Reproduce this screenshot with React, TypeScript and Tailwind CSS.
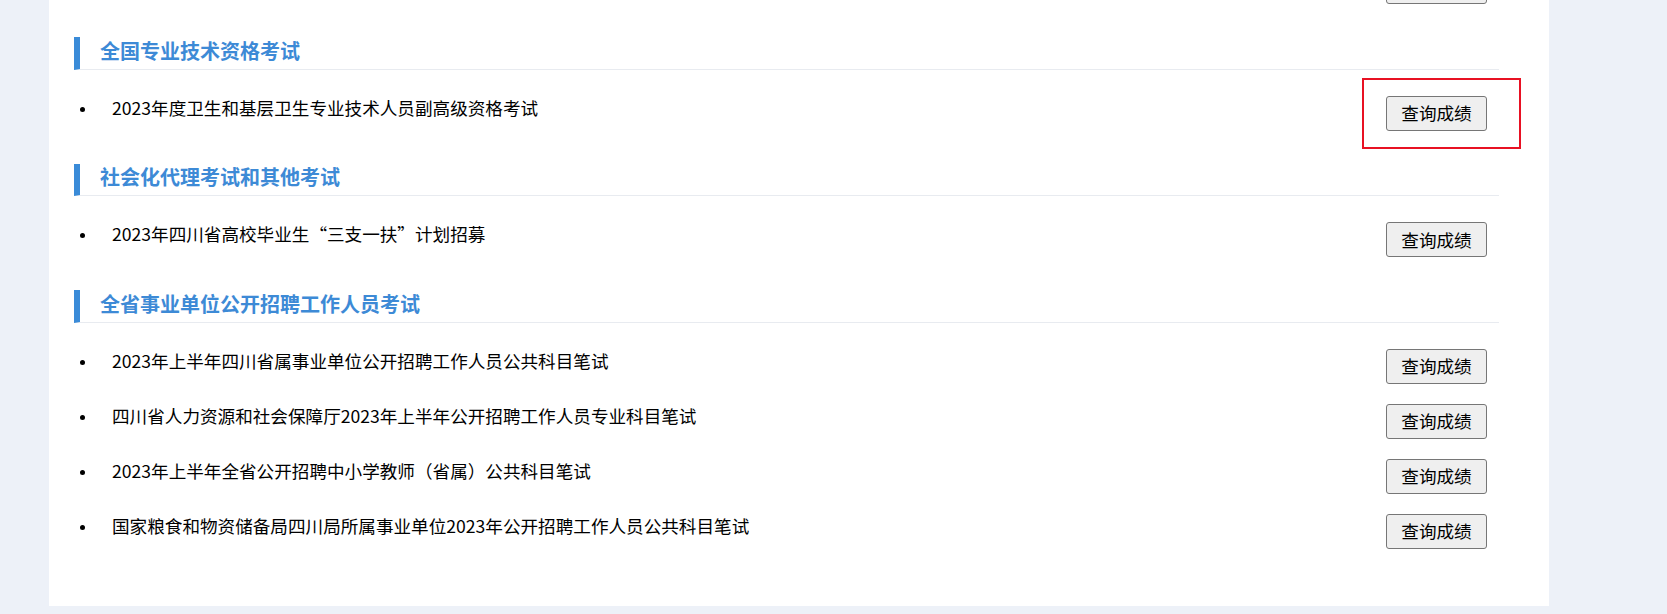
import React from "react";

type Section = { title: string; items: string[]; highlightFirst?: boolean };

const sections: Section[] = [
  {
    title: "全国专业技术资格考试",
    items: ["2023年度卫生和基层卫生专业技术人员副高级资格考试"],
    highlightFirst: true,
  },
  {
    title: "社会化代理考试和其他考试",
    items: ["2023年四川省高校毕业生“三支一扶”计划招募"],
  },
  {
    title: "全省事业单位公开招聘工作人员考试",
    items: [
      "2023年上半年四川省属事业单位公开招聘工作人员公共科目笔试",
      "四川省人力资源和社会保障厅2023年上半年公开招聘工作人员专业科目笔试",
      "2023年上半年全省公开招聘中小学教师（省属）公共科目笔试",
      "国家粮食和物资储备局四川局所属事业单位2023年公开招聘工作人员公共科目笔试",
    ],
  },
];

function QueryButton({ highlight }: { highlight?: boolean }) {
  return (
    <span className="relative shrink-0">
      <button
        type="button"
        className="flex h-[35.4px] w-[101px] items-center justify-center rounded-[3px] border border-[#767676] bg-[#efefef] text-[17.6px] leading-none text-black"
      >
        查询成绩
      </button>
      {highlight && (
        <span className="pointer-events-none absolute -left-[24px] -top-[18px] h-[71px] w-[159px] border-2 border-[#e81123]" />
      )}
    </span>
  );
}

function Row({ text, highlight }: { text: string; highlight?: boolean }) {
  return (
    <div className="flex h-[55px] items-start pl-[6px] pr-[12px]">
      <span className="mt-[11px] h-[5px] w-[5px] shrink-0 rounded-full bg-black" />
      <span className="ml-[27px] flex-1 whitespace-nowrap text-[17.6px] leading-[24px] text-black">
        {text}
      </span>
      <QueryButton highlight={highlight} />
    </div>
  );
}

function PartialRow() {
  // Bottom of the previous section's last row, scrolled mostly out of view.
  return (
    <div className="flex h-[55px] items-start justify-end pr-[12px]" aria-hidden="true">
      <span className="block h-[35.4px] w-[101px] rounded-[3px] border border-[#767676] bg-[#efefef]" />
    </div>
  );
}

function Heading({ title }: { title: string }) {
  return (
    <div className="flex h-[32.5px] items-center border-b border-l-[6px] border-b-[#e8ebf0] border-l-[#3a8bd8] pb-[4px] pl-[20px]">
      <h2 className="text-[20px] font-bold leading-none text-[#3d8ad6]">{title}</h2>
    </div>
  );
}

export default function App() {
  return (
    <div className="h-[614px] w-full overflow-hidden bg-[#edf1f8] font-['Noto_Sans_CJK_SC','Microsoft_YaHei',sans-serif]">
      <div className="-mt-[31px] ml-[49px] w-[1500px] bg-white pb-[37.5px] pl-[25px] pr-[50px]">
        <PartialRow />
        {sections.map((s) => (
          <section key={s.title} className="mt-[13px]">
            <Heading title={s.title} />
            <div className="mt-[26px]">
              {s.items.map((it, i) => (
                <Row key={it} text={it} highlight={s.highlightFirst && i === 0} />
              ))}
            </div>
          </section>
        ))}
      </div>
    </div>
  );
}
